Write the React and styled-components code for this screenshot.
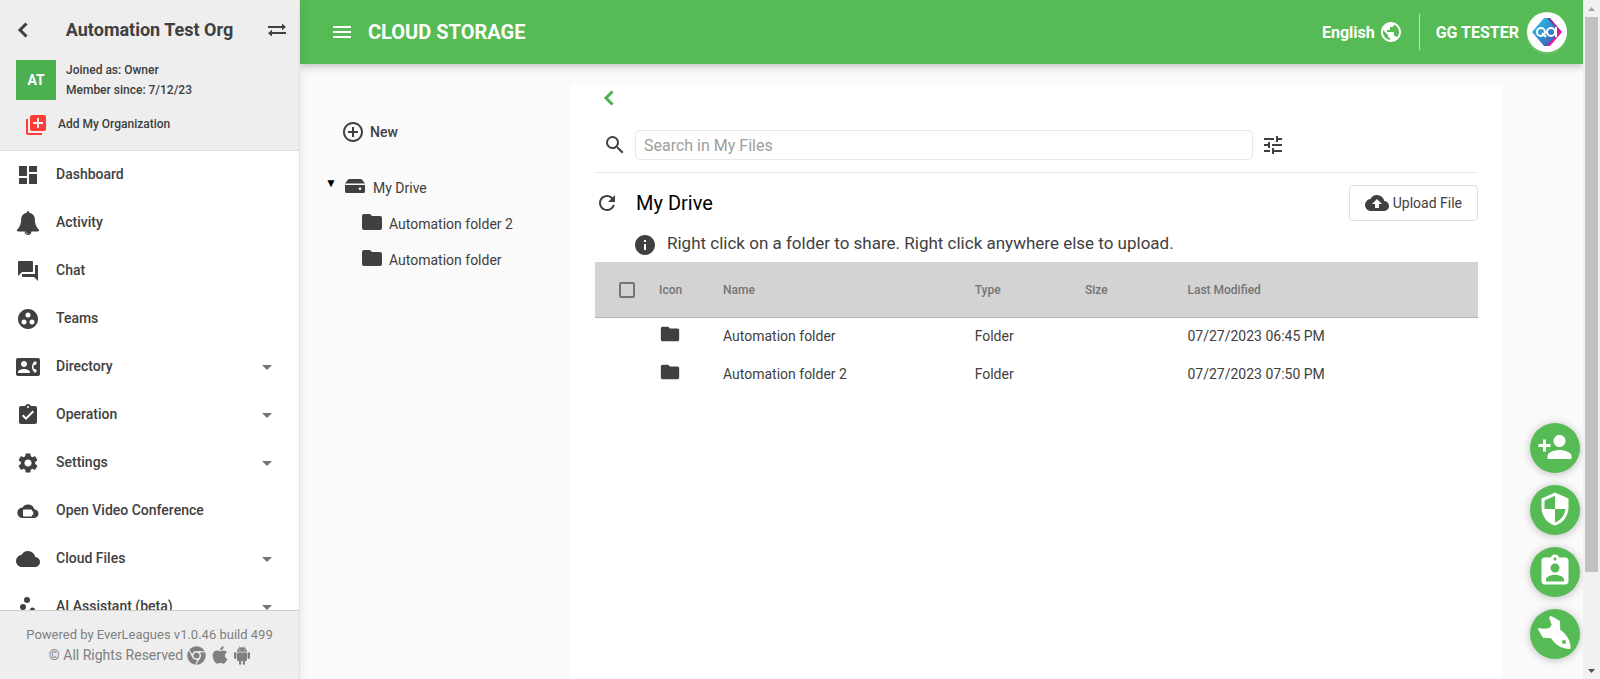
import React from "react";
import styled, { createGlobalStyle, css } from "styled-components";
import {
  MdDashboard, MdForum, MdGroupWork, MdContactPhone, MdAssignmentTurnedIn, MdSettings,
  MdCloud, MdLibraryAdd, MdMenu, MdPublic, MdAddCircleOutline, MdFolder, MdSearch,
  MdTune, MdRefresh, MdInfo, MdBackup, MdPersonAdd, MdSecurity, MdAssignmentInd,
  MdArrowDropDown,
} from "react-icons/md";
import { FaChrome, FaApple } from "react-icons/fa";

const GlobalStyle = createGlobalStyle`
  *, *::before, *::after { box-sizing: border-box; }
  body { margin: 0; font-family: Roboto, "Liberation Sans", sans-serif; font-size: 14px; color: #404040; background: #fafafa; }
  button, input { font: inherit; color: inherit; }
  a { color: inherit; text-decoration: none; }
  ul { list-style: none; margin: 0; padding: 0; }
  h1, h2, p { margin: 0; }
  svg { display: block; flex: none; }
`;

/* ---------- icons ---------- */
const BellIcon = () => (
  <svg width="24" height="24" viewBox="0 0 1792 1792" fill="currentColor" aria-hidden="true">
    <path d="M912 1696q0-16-16-16-59 0-101.500-42.500t-42.500-101.500q0-16-16-16t-16 16q0 73 51.500 124.500t124.500 51.500q16 0 16-16zm816-288q0 52-38 90t-90 38h-448q0 106-75 181t-181 75-181-75-75-181h-448q-52 0-90-38t-38-90q50-42 91-88t85-119.500 74.500-158.500 50-206 19.500-260q0-152 117-282.500t307-158.500q-8-19-8-39 0-40 28-68t68-28 68 28 28 68q0 20-8 39 190 28 307 158.500t117 282.500q0 139 19.500 260t50 206 74.500 158.500 85 119.500 91 88z" />
  </svg>
);
const VideoCloudIcon = () => (
  <svg width="24" height="24" viewBox="0 0 24 24" aria-hidden="true">
    <path fill="currentColor" d="M18.300 10.300A6.500 6.500 0 0 0 6.500 8.600 5.200 5.200 0 0 0 6.500 19H18a4.300 4.300 0 0 0 .3-8.700z" />
    <path fill="#fff" d="M7.800 10.500h7.400a.8.8 0 0 1 .8.800v1.500l1.200-1v4.800l-1.200-1v1.100a.8.8 0 0 1-.8.800H7.800a.8.8 0 0 1-.8-.8v-5.400a.8.8 0 0 1 .8-.8z" />
  </svg>
);
const AssistantIcon = () => (
  <svg width="24" height="24" viewBox="0 0 24 24" fill="currentColor" aria-hidden="true">
    <circle cx="11" cy="5" r="3" />
    <circle cx="7" cy="12" r="3" />
    <circle cx="16.500" cy="15" r="2.500" />
    <circle cx="10" cy="19" r="2" />
  </svg>
);
const AndroidIcon = () => (
  <svg width="16" height="20" viewBox="0 0 16 20" aria-hidden="true">
    <path fill="currentColor" d="M3 7.500h10V15a1 1 0 0 1-1 1h-1v2.800a1.100 1.100 0 0 1-2.200 0V16H7.200v2.800a1.100 1.100 0 0 1-2.200 0V16H4a1 1 0 0 1-1-1zM1.200 7.200c.7 0 1.200.5 1.200 1.200v4.400a1.200 1.200 0 0 1-2.400 0V8.400c0-.7.5-1.200 1.200-1.200zM14.800 7.200c.7 0 1.200.5 1.200 1.200v4.400a1.200 1.200 0 0 1-2.400 0V8.400c0-.7.5-1.200 1.200-1.200zM3 6.800c0-1.800 1-3.200 2.500-4L4.700 1.300l.4-.3.9 1.600a6 6 0 0 1 4 0l.9-1.600.4.3-.8 1.500c1.500.8 2.500 2.200 2.500 4z" />
    <circle cx="5.800" cy="4.800" r=".6" fill="#eee" />
    <circle cx="10.200" cy="4.800" r=".6" fill="#eee" />
  </svg>
);
const ChevronIcon = ({ size, weight }) => (
  <svg width={size} height={size} viewBox="0 0 16 16" fill="none" stroke="currentColor" strokeWidth={weight} aria-hidden="true">
    <path d="M11.500 1.500 5 8l6.500 6.500" />
  </svg>
);
const SwapIcon = () => (
  <svg width="18" height="14" viewBox="0 0 18 14" fill="currentColor" aria-hidden="true">
    <path d="M0 3h14V.5L18 4l-4 3.200V5H0zM18 9H4V6.800L0 10.200l4 3.300V11h14z" />
  </svg>
);
const DriveIcon = () => (
  <svg width="20" height="14" viewBox="0 0 20 14" aria-hidden="true">
    <path fill="currentColor" d="M4.200 0h11.600a1.500 1.500 0 0 1 1.100.5L20 4.500H0L3.100.5A1.500 1.500 0 0 1 4.200 0zM0 6h20v6.500a1.500 1.500 0 0 1-1.500 1.500h-17A1.500 1.500 0 0 1 0 12.500z" />
    <circle cx="15" cy="9.800" r="1.300" fill="#fff" />
  </svg>
);
const RocketIcon = () => (
  <svg width="34" height="34" viewBox="0 0 34 34" aria-hidden="true">
    <path fill="#fff" d="M13.600.3 21.500 4.800c.4.300.6.700.6 1.200v7.600c6.200 4.800 10.300 10.400 10.600 18.200 0 .7-.4 1.100-1.100 1.100-8-.3-14.500-4.200-18.600-10.700L5.800 21.800c-.5 0-.8-.2-1.100-.6L.3 14c-.5-1.100.2-2 1.400-2l2.600.8 6.700-.6 2.700-3.200-2.300-6.500c-.4-1.500.8-2.900 2.200-2.200z" />
    <circle cx="26" cy="26" r="2" fill="#56bb54" />
  </svg>
);
const QaLogo = () => (
  <svg width="32" height="28" viewBox="0 0 32 28" aria-hidden="true">
    <defs>
      <linearGradient id="qaBlue" x1="0" y1="0" x2="1" y2="1">
        <stop offset="0" stopColor="#2fd0e8" />
        <stop offset=".5" stopColor="#2f8fd0" />
        <stop offset="1" stopColor="#4a4ab0" />
      </linearGradient>
      <linearGradient id="qaPink" x1="0" y1="0" x2="0" y2="1">
        <stop offset="0" stopColor="#5b3a98" />
        <stop offset=".5" stopColor="#e0189a" />
        <stop offset="1" stopColor="#ff1290" />
      </linearGradient>
    </defs>
    <path fill="url(#qaPink)" d="M16 0h3l12 14-12 14h-3z" />
    <path fill="url(#qaBlue)" d="M13 0h3l10 11v6L16 28h-3L1 14z" />
    <g fill="none" stroke="#fff" strokeWidth="2">
      <circle cx="10" cy="14" r="4" />
      <path d="m11 15 4 4" />
      <circle cx="20" cy="14" r="4" />
      <path d="M25 9v10" />
    </g>
  </svg>
);

/* ---------- shell ---------- */
const Page = styled.div`
  display: flex;
  height: 100vh;
  overflow: hidden;
`;
const Sidebar = styled.aside`
  display: flex;
  flex-direction: column;
  flex: none;
  width: 300px;
  background: #fff;
  border-right: 1px solid #e0e0e0;
  box-shadow: 0 0 12px rgba(0, 0, 0, 0.08);
  z-index: 1;
`;
const IconButton = styled.button`
  display: flex;
  align-items: center;
  justify-content: center;
  padding: 0;
  border: 0;
  background: none;
  cursor: pointer;
`;

const OrgPanel = styled.header`
  flex: none;
  height: 151px;
  padding: 16px 13px 0 15px;
  background: #eee;
  border-bottom: 1px solid #e0e0e0;
`;
const OrgTop = styled.div`
  display: flex;
  align-items: center;
  justify-content: space-between;
  height: 28px;
`;
const OrgName = styled.h2`
  font-size: 18px;
  font-weight: 700;
  line-height: 28px;
`;
const OrgInfo = styled.div`
  display: flex;
  gap: 10px;
  margin: 16px 0 0 1px;
  font-size: 12px;
  font-weight: 500;
  line-height: 20px;
`;
const OrgBadge = styled.span`
  width: 40px;
  height: 40px;
  background: #4caf50;
  color: #fff;
  font-size: 14px;
  font-weight: 700;
  line-height: 40px;
  text-align: center;
`;
const AddOrg = styled.button`
  display: flex;
  align-items: center;
  gap: 10px;
  margin-top: 12px;
  padding: 0 0 0 9px;
  border: 0;
  background: none;
  font-size: 12px;
  font-weight: 500;
  line-height: 24px;
  svg { color: #ff3d36; }
  span { padding-bottom: 2px; }
`;

const Nav = styled.nav`
  flex: 1;
  min-height: 0;
  overflow: hidden;
`;
const NavLink = styled.a`
  display: flex;
  align-items: center;
  height: 48px;
  padding: 0 20px 0 16px;
  font-weight: 500;
`;
const NavLabel = styled.span`
  flex: 1;
  padding: 0 0 2px 16px;
  line-height: 20px;
`;
const Caret = styled(MdArrowDropDown)`
  color: #757575;
`;
const SideFooter = styled.footer`
  flex: none;
  height: 69px;
  padding-top: 14px;
  background: #eee;
  border-top: 1px solid #ccc;
  color: #808080;
  font-size: 13px;
  line-height: 20px;
  text-align: center;
`;
const Rights = styled.div`
  display: flex;
  align-items: center;
  justify-content: center;
  gap: 4px;
  font-size: 14px;
  line-height: 18px;
`;

const Main = styled.main`
  display: flex;
  flex-direction: column;
  flex: 1;
  min-width: 0;
`;
const TopBar = styled.header`
  display: flex;
  align-items: center;
  flex: none;
  height: 64px;
  padding: 0 16px 0 30px;
  background: #56bb54;
  color: #fff;
  box-shadow: 0 2px 8px rgba(0, 0, 0, 0.25);
  font-weight: 700;
`;
const Title = styled.h1`
  flex: 1;
  padding-left: 14px;
  font-size: 20px;
  font-weight: 700;
  line-height: 24px;
`;
const Language = styled.button`
  display: flex;
  align-items: center;
  gap: 4px;
  padding: 0;
  border: 0;
  background: none;
  font-size: 16px;
  font-weight: 700;
`;
const Divider = styled.span`
  width: 1px;
  height: 36px;
  margin: 0 16px;
  background: #c8dcc8;
`;
const Avatar = styled.span`
  display: flex;
  align-items: center;
  justify-content: center;
  width: 40px;
  height: 40px;
  margin-left: 8px;
  border-radius: 50%;
  background: #fff;
  box-shadow: 0 2px 3px rgba(255, 255, 255, 0.15);
`;
const UserName = styled.span`
  font-size: 16px;
`;

const Body = styled.div`
  display: flex;
  flex: 1;
  min-height: 0;
  padding: 20px 80px 0 0;
`;
const FolderPane = styled.section`
  flex: none;
  width: 270px;
  padding: 36px 0 0 25px;
`;
const NewButton = styled.button`
  display: flex;
  align-items: center;
  gap: 5px;
  padding: 0 0 0 16px;
  border: 0;
  background: none;
  font-weight: 500;
  line-height: 24px;
`;
const Tree = styled.ul`
  padding-top: 26px;
`;
const TreeItem = styled.li`
  display: flex;
  align-items: center;
  height: 36px;
  gap: ${(p) => (p.$child ? 5 : 8)}px;
  padding-left: ${(p) => (p.$child ? 35 : 0)}px;
  svg { margin-bottom: 4px; }
`;
const Disclosure = styled.button`
  width: 12px;
  height: 24px;
  padding: 0 0 10px;
  border: 0;
  background: none;
  color: #000;
  font-size: 12px;
  line-height: 14px;
`;

const Card = styled.section`
  flex: 1;
  min-width: 0;
  padding: 0 25px;
  background: #fff;
  border-radius: 4px 4px 0 0;
`;
const BackRow = styled.div`
  display: flex;
  height: 28px;
  padding-left: 6px;
  color: #4caf50;
`;
const SearchRow = styled.div`
  display: flex;
  align-items: center;
  height: 61px;
  padding-top: 6px;
  border-bottom: 1px solid #e8e8e8;
`;
const SearchIcon = styled(MdSearch)`
  margin-left: 8px;
`;
const SearchInput = styled.input`
  width: 70%;
  height: 30px;
  margin: 0 8px;
  padding: 0 8px;
  border: 1px solid #e8e8e8;
  border-radius: 5px;
  outline: 0;
  font-size: 16px;
  &::placeholder { color: #9e9e9e; }
`;
const HeadingRow = styled.div`
  display: flex;
  align-items: center;
  height: 60px;
`;
const Heading = styled.h2`
  flex: 1;
  padding-left: 17px;
  color: #000;
  font-size: 20px;
  font-weight: 400;
`;
const UploadButton = styled.button`
  display: flex;
  align-items: center;
  gap: 4px;
  height: 36px;
  padding: 0 15px;
  border: 1px solid #e0e0e0;
  border-radius: 4px;
  background: #fff;
  font-size: 14px;
`;
const Hint = styled.p`
  display: flex;
  align-items: center;
  gap: 10px;
  margin-bottom: 5px;
  padding-left: 38px;
  font-size: 17px;
  line-height: 24px;
  span { padding-bottom: 4px; line-height: 20px; }
`;

const Table = styled.table`
  width: 100%;
  table-layout: fixed;
  border-collapse: collapse;
  text-align: left;
`;
const Th = styled.th`
  width: ${(p) => p.$w};
  height: 55px;
  padding: 1px 0 0;
  background: #d3d3d3;
  border-bottom: 1px solid #b5b5b5;
  color: #757575;
  font-size: 12px;
  font-weight: 500;
  ${(p) => p.$check && css`padding-left: 24px;`}
`;
const Td = styled.td`
  height: 38px;
  padding: 0;
  svg { margin-bottom: 4px; }
`;
const CheckBox = styled.input`
  display: block;
  appearance: none;
  width: 16px;
  height: 16px;
  margin: 0;
  border: 2px solid #757575;
  border-radius: 2px;
`;

const Fabs = styled.div`
  position: fixed;
  right: 20px;
  bottom: 20px;
  display: flex;
  flex-direction: column;
  gap: 12px;
`;
const Fab = styled.button`
  display: flex;
  align-items: center;
  justify-content: center;
  width: 50px;
  height: 50px;
  padding: 0 0 2px;
  border: 0;
  border-radius: 50%;
  background: #56bb54;
  color: #fff;
  box-shadow: 0 1px 8px rgba(0, 0, 0, 0.25);
`;
const ScrollTrack = styled.div`
  display: flex;
  flex-direction: column;
  align-items: center;
  flex: none;
  width: 17px;
  background: #f1f1f1;
  z-index: 1;
`;
const ScrollArrow = styled.span`
  display: flex;
  align-items: center;
  justify-content: center;
  height: 17px;
  color: ${(p) => (p.$muted ? "#a3a3a3" : "#505050")};
`;
const ScrollLane = styled.div`
  flex: 1;
`;
const ScrollThumb = styled.div`
  width: 13px;
  height: 86%;
  background: #c1c1c1;
`;

const navItems = [
  ["Dashboard", MdDashboard],
  ["Activity", BellIcon],
  ["Chat", MdForum],
  ["Teams", MdGroupWork],
  ["Directory", MdContactPhone, true],
  ["Operation", MdAssignmentTurnedIn, true],
  ["Settings", MdSettings, true],
  ["Open Video Conference", VideoCloudIcon],
  ["Cloud Files", MdCloud, true],
  ["AI Assistant (beta)", AssistantIcon, true],
];
const files = [
  { name: "Automation folder", type: "Folder", modified: "07/27/2023 06:45 PM" },
  { name: "Automation folder 2", type: "Folder", modified: "07/27/2023 07:50 PM" },
];

export default function App() {
  return (
    <>
      <GlobalStyle />
      <Page>
        <Sidebar>
          <OrgPanel>
            <OrgTop>
              <IconButton aria-label="Back"><ChevronIcon size={16} weight={3} /></IconButton>
              <OrgName>Automation Test Org</OrgName>
              <IconButton aria-label="Switch organization"><SwapIcon /></IconButton>
            </OrgTop>
            <OrgInfo>
              <OrgBadge>AT</OrgBadge>
              <div>
                <div>Joined as: Owner</div>
                <div>Member since: 7/12/23</div>
              </div>
            </OrgInfo>
            <AddOrg><MdLibraryAdd size={24} /><span>Add My Organization</span></AddOrg>
          </OrgPanel>
          <Nav>
            <ul>
              {navItems.map(([label, Icon, more]) => (
                <li key={label}>
                  <NavLink href="#">
                    <Icon size={24} />
                    <NavLabel>{label}</NavLabel>
                    {more && <Caret size={24} />}
                  </NavLink>
                </li>
              ))}
            </ul>
          </Nav>
          <SideFooter>
            <div>Powered by EverLeagues v1.0.46 build 499</div>
            <Rights>
              © All Rights Reserved
              <FaChrome size={19} />
              <FaApple size={20} />
              <AndroidIcon />
            </Rights>
          </SideFooter>
        </Sidebar>

        <Main>
          <TopBar>
            <IconButton aria-label="Menu"><MdMenu size={24} color="#fff" /></IconButton>
            <Title>CLOUD STORAGE</Title>
            <Language><span>English</span><MdPublic size={24} /></Language>
            <Divider />
            <UserName>GG TESTER</UserName>
            <Avatar><QaLogo /></Avatar>
          </TopBar>
          <Body>
            <FolderPane>
              <NewButton><MdAddCircleOutline size={24} />New</NewButton>
              <Tree>
                <TreeItem>
                  <Disclosure aria-label="Collapse My Drive">▼</Disclosure>
                  <DriveIcon />
                  <a href="#">My Drive</a>
                </TreeItem>
                <TreeItem $child><MdFolder size={24} /><a href="#">Automation folder 2</a></TreeItem>
                <TreeItem $child><MdFolder size={24} /><a href="#">Automation folder</a></TreeItem>
              </Tree>
            </FolderPane>
            <Card>
              <BackRow><IconButton aria-label="Up one level"><ChevronIcon size={16} weight={3} /></IconButton></BackRow>
              <SearchRow>
                <SearchIcon size={24} />
                <SearchInput type="search" aria-label="Search in My Files" placeholder="Search in My Files" />
                <IconButton aria-label="Filter"><MdTune size={24} /></IconButton>
              </SearchRow>
              <HeadingRow>
                <IconButton aria-label="Refresh"><MdRefresh size={24} /></IconButton>
                <Heading>My Drive</Heading>
                <UploadButton><MdBackup size={24} />Upload File</UploadButton>
              </HeadingRow>
              <Hint>
                <MdInfo size={24} />
                <span>Right click on a folder to share. Right click anywhere else to upload.</span>
              </Hint>
              <Table>
                <thead>
                  <tr>
                    <Th $w="64px" $check><CheckBox type="checkbox" aria-label="Select all" /></Th>
                    <Th $w="64px">Icon</Th>
                    <Th $w="28.5%">Name</Th>
                    <Th $w="12.5%">Type</Th>
                    <Th $w="11.6%">Size</Th>
                    <Th>Last Modified</Th>
                  </tr>
                </thead>
                <tbody>
                  {files.map((f) => (
                    <tr key={f.name}>
                      <Td />
                      <Td><MdFolder size={22} /></Td>
                      <Td>{f.name}</Td>
                      <Td>{f.type}</Td>
                      <Td />
                      <Td>{f.modified}</Td>
                    </tr>
                  ))}
                </tbody>
              </Table>
            </Card>
          </Body>
        </Main>

        <ScrollTrack aria-hidden="true">
          <ScrollArrow $muted><svg width="7" height="4" viewBox="0 0 7 4"><path d="M0 4 3.500 0 7 4z" fill="currentColor" /></svg></ScrollArrow>
          <ScrollLane><ScrollThumb /></ScrollLane>
          <ScrollArrow><svg width="7" height="4" viewBox="0 0 7 4"><path d="M0 0h7L3.500 4z" fill="currentColor" /></svg></ScrollArrow>
        </ScrollTrack>

        <Fabs>
          <Fab aria-label="Add person"><MdPersonAdd size={36} /></Fab>
          <Fab aria-label="Security"><MdSecurity size={36} /></Fab>
          <Fab aria-label="Assignments"><MdAssignmentInd size={36} /></Fab>
          <Fab aria-label="Launch"><RocketIcon /></Fab>
        </Fabs>
      </Page>
    </>
  );
}
